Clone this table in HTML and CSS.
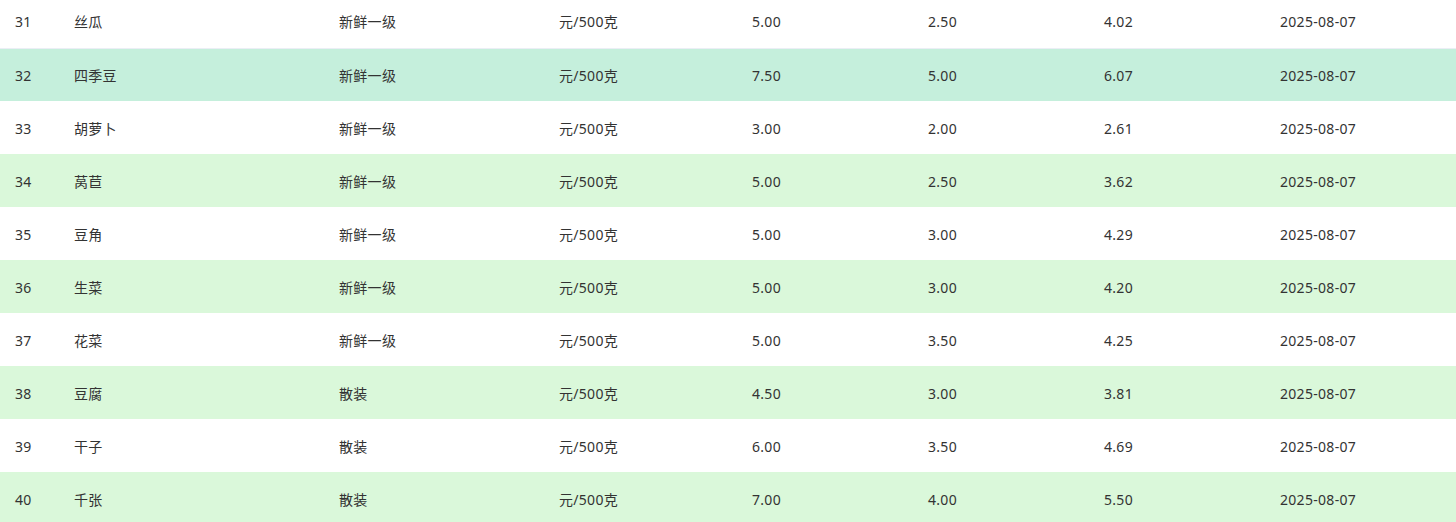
FILE: index.html
```html
<!DOCTYPE html>
<html lang="zh-CN">
<head>
<meta charset="utf-8">
<title>蔬菜价格</title>
<link rel="stylesheet" href="styles.css">
</head>
<body>
<div class="table-wrap">
<table class="price-table">
<colgroup>
<col class="c-no"><col class="c-name"><col class="c-grade"><col class="c-unit"><col class="c-num"><col class="c-num"><col class="c-num"><col class="c-date">
</colgroup>
<tbody>
<tr class="first"><td>31</td><td>丝瓜</td><td>新鲜一级</td><td>元/500克</td><td>5.00</td><td>2.50</td><td>4.02</td><td>2025-08-07</td></tr>
<tr class="hover"><td>32</td><td>四季豆</td><td>新鲜一级</td><td>元/500克</td><td>7.50</td><td>5.00</td><td>6.07</td><td>2025-08-07</td></tr>
<tr><td>33</td><td>胡萝卜</td><td>新鲜一级</td><td>元/500克</td><td>3.00</td><td>2.00</td><td>2.61</td><td>2025-08-07</td></tr>
<tr class="stripe"><td>34</td><td>莴苣</td><td>新鲜一级</td><td>元/500克</td><td>5.00</td><td>2.50</td><td>3.62</td><td>2025-08-07</td></tr>
<tr><td>35</td><td>豆角</td><td>新鲜一级</td><td>元/500克</td><td>5.00</td><td>3.00</td><td>4.29</td><td>2025-08-07</td></tr>
<tr class="stripe"><td>36</td><td>生菜</td><td>新鲜一级</td><td>元/500克</td><td>5.00</td><td>3.00</td><td>4.20</td><td>2025-08-07</td></tr>
<tr><td>37</td><td>花菜</td><td>新鲜一级</td><td>元/500克</td><td>5.00</td><td>3.50</td><td>4.25</td><td>2025-08-07</td></tr>
<tr class="stripe"><td>38</td><td>豆腐</td><td>散装</td><td>元/500克</td><td>4.50</td><td>3.00</td><td>3.81</td><td>2025-08-07</td></tr>
<tr><td>39</td><td>干子</td><td>散装</td><td>元/500克</td><td>6.00</td><td>3.50</td><td>4.69</td><td>2025-08-07</td></tr>
<tr class="stripe"><td>40</td><td>千张</td><td>散装</td><td>元/500克</td><td>7.00</td><td>4.00</td><td>5.50</td><td>2025-08-07</td></tr>
</tbody>
</table>
</div>
</body>
</html>
```
FILE: styles.css
```css
html, body {
  margin: 0;
  padding: 0;
  background: #ffffff;
  overflow: hidden;
}
.table-wrap {
  margin-top: -5px;
  width: 1456px;
}
.price-table {
  width: 100%;
  border-collapse: collapse;
  table-layout: fixed;
  font-family: "Noto Sans", "Noto Sans CJK SC", sans-serif;
  font-size: 14px;
  letter-spacing: 0.3px;
  color: #333333;
}
.c-no { width: 59px; }
.c-name { width: 265px; }
.c-grade { width: 220px; }
.c-unit { width: 193px; }
.c-num { width: 176px; }
.c-date { width: auto; }
.price-table td {
  height: 53px;
  padding: 2px 0 0 15px;
  vertical-align: middle;
  white-space: nowrap;
  line-height: 20px;
  box-sizing: border-box;
}
.price-table tr.first td {
  border-bottom: 1px solid #ebeef5;
}
.price-table tr.stripe td {
  background: #daf8da;
}
.price-table tr.hover td {
  background: #c5efdc;
}
```
